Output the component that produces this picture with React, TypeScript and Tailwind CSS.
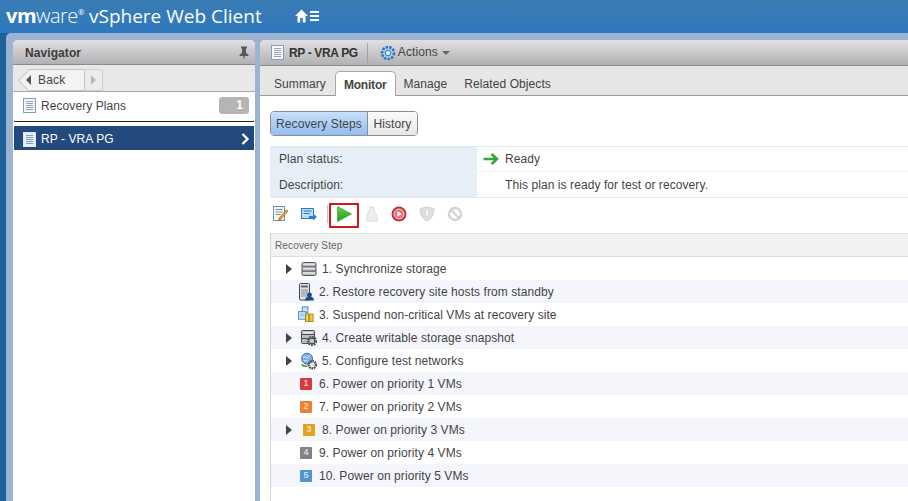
const font = "font-['Liberation_Sans',Arial,sans-serif]"

function DocIcon({ dark }: { dark?: boolean }) {
  return (
    <svg width="13" height="15" viewBox="0 0 13 15" className="shrink-0">
      <rect x="0.5" y="0.5" width="12" height="14" fill={dark ? "#e8eef5" : "#f7fafd"} stroke={dark ? "#dfe8f2" : "#7f9fc0"} />
      <path d="M3 3.5h7M3 5.5h7M3 7.5h7M3 9.5h7M3 11.5h7" stroke={dark ? "#7f9abb" : "#98a4b2"} strokeWidth="1" />
    </svg>
  )
}

function Gear({ x, y }: { x: number; y: number }) {
  return (
    <g transform={`translate(${x} ${y})`}>
      <circle r="3.8" fill="none" stroke="#4d5358" strokeWidth="2.6" strokeDasharray="1.8 0.7" />
      <circle r="1.2" fill="#c9cdd0" />
    </g>
  )
}

function StorageIcon() {
  return (
    <svg width="16" height="16" viewBox="0 0 16 16">
      <rect x="1" y="1.5" width="14" height="13" rx="1.5" fill="#b4b7bb" stroke="#55595e" />
      <path d="M1.5 5.8h13M1.5 10.2h13" stroke="#55595e" />
      <rect x="2" y="2.5" width="12" height="1.6" fill="#e2e4e6" />
      <rect x="2" y="6.8" width="12" height="1.6" fill="#e2e4e6" />
      <rect x="2" y="11.2" width="12" height="1.6" fill="#e2e4e6" />
    </svg>
  )
}

function HostIcon() {
  return (
    <svg width="16" height="18" viewBox="0 0 16 18">
      <rect x="1.5" y="0.5" width="10" height="16.5" rx="1" fill="#dfe3e8" stroke="#3f4a57" />
      <rect x="3" y="2.5" width="7" height="2" fill="#5a6878" />
      <rect x="3" y="6" width="7" height="8" fill="#aeb8c3" />
      <circle cx="11.5" cy="12" r="2.4" fill="#1d4f86" />
      <path d="M7 17.5c0-3 2-4 4.5-4s4.5 1 4.5 4z" fill="#1d4f86" />
    </svg>
  )
}

function SuspendIcon() {
  return (
    <svg width="17" height="17" viewBox="0 0 17 17">
      <rect x="4.5" y="0.5" width="6" height="6" fill="#cfe3f5" stroke="#3f86c4" />
      <rect x="0.5" y="5.5" width="8" height="8" fill="#d8e9f8" stroke="#3f86c4" />
      <path d="M2 8h5M2 10h5" stroke="#7fb0da" />
      <rect x="8" y="8" width="3.5" height="8" fill="#f4cf4f" stroke="#a87f17" />
      <rect x="12.5" y="8" width="3.5" height="8" fill="#f4cf4f" stroke="#a87f17" />
    </svg>
  )
}

function SnapshotIcon() {
  return (
    <svg width="16" height="17" viewBox="0 0 16 17">
      <rect x="0.5" y="1.5" width="13" height="13" rx="1" fill="#b9bcc0" stroke="#4b4f54" />
      <path d="M1 5.5h12M1 9.5h12" stroke="#4b4f54" />
      <rect x="2" y="3" width="10" height="1.4" fill="#f2f3f4" />
      <Gear x={11} y={12} />
    </svg>
  )
}

function NetworkIcon() {
  return (
    <svg width="17" height="18" viewBox="0 0 17 18">
      <circle cx="6.5" cy="6.5" r="5.8" fill="#7fb0ea" stroke="#3467b0" />
      <path d="M2 5c2-1 3 1 5 0s2-2 3-2M3 9c2-1 3 0 5 1" stroke="#e8f2fc" fill="none" />
      <path d="M0.5 12.5c2 2 4 2.5 6 2" stroke="#3d9a48" strokeWidth="1.6" fill="none" />
      <Gear x={12} y={13} />
    </svg>
  )
}

function Priority({ n, bg }: { n: number; bg: string }) {
  return (
    <div className={`w-[12px] h-[12px] rounded-[1px] flex items-center justify-center text-[9px] leading-none font-bold text-white/70 ${bg}`}>
      {n}
    </div>
  )
}

function PlayIcon() {
  return (
    <svg width="15" height="16" viewBox="0 0 15 16">
      <defs>
        <linearGradient id="pg" x1="0" y1="0" x2="0" y2="1">
          <stop offset="0" stopColor="#6fd04a" />
          <stop offset="1" stopColor="#1f9a20" />
        </linearGradient>
      </defs>
      <path d="M0.5 0.5L14.5 8L0.5 15.5Z" fill="url(#pg)" stroke="#2a9a2a" strokeWidth="0.6" />
    </svg>
  )
}

const steps = [
  { text: "1. Synchronize storage", arrow: true, icon: <StorageIcon /> },
  { text: "2. Restore recovery site hosts from standby", icon: <HostIcon /> },
  { text: "3. Suspend non-critical VMs at recovery site", icon: <SuspendIcon /> },
  { text: "4. Create writable storage snapshot", arrow: true, icon: <SnapshotIcon /> },
  { text: "5. Configure test networks", arrow: true, icon: <NetworkIcon /> },
  { text: "6. Power on priority 1 VMs", icon: <Priority n={1} bg="bg-[#d9373c]" /> },
  { text: "7. Power on priority 2 VMs", icon: <Priority n={2} bg="bg-[#ee8030]" /> },
  { text: "8. Power on priority 3 VMs", arrow: true, icon: <Priority n={3} bg="bg-[#e0a41c]" /> },
  { text: "9. Power on priority 4 VMs", icon: <Priority n={4} bg="bg-[#808285]" /> },
  { text: "10. Power on priority 5 VMs", icon: <Priority n={5} bg="bg-[#4f94cc]" /> },
]

export default function App() {
  return (
    <div className={`w-[908px] h-[501px] overflow-hidden flex flex-col bg-[#1f6199] ${font} text-[12px] tracking-[0.08px] text-[#444]`}>
      {/* Header */}
      <header className="h-[33px] shrink-0 flex items-center pl-[6px] bg-gradient-to-b from-[#3a7db5] to-[#2e78bd] text-white">
        <span className="font-['Open_Sans',sans-serif] text-[20px] leading-none tracking-[-0.5px] mb-[2px]">
          <span className="font-bold">vm</span>
          <span className="font-light">ware</span>
          <span className="text-[8px] align-super">®</span>
        </span>
        <span className="ml-[5px] font-['Open_Sans',sans-serif] text-[19px] leading-none tracking-normal mb-[1px]">vSphere Web Client</span>
        <svg width="24" height="14" viewBox="0 0 24 14" className="ml-[33px] mb-[1px]">
          <path d="M6.5 0.5L0 7H2.5V13.5H5.2V9H7.8V13.5H10.5V7H13Z" fill="#fff" />
          <path d="M15 3h9M15 7h9M15 11h9" stroke="#fff" strokeWidth="2" />
        </svg>
      </header>

      <div className="flex-1 flex min-h-0 ml-[6px] pl-[7px] pt-[7px] gap-[5px] rounded-tl-[5px] bg-[#9ab4d2]">
        {/* Navigator */}
        <aside className="w-[242px] shrink-0 flex flex-col bg-white rounded-t-[5px] overflow-hidden">
          <div className="h-[25px] shrink-0 flex items-center justify-between pl-[12px] pr-[5px] pt-[1px] bg-gradient-to-b from-[#e4dfe2] to-[#b1b1b3] border-b border-[#8c8c8c] font-bold text-[#3c3c3c]">
            <span>Navigator</span>
            <svg width="12" height="14" viewBox="0 0 12 14">
              <path d="M3 0.5h6v1.5l-1 .7v4l2.5 2.3v1H6.8L6 14l-.8-4H1.5V9L4 6.7v-4L3 2z" fill="#55585c" />
            </svg>
          </div>
          <div className="h-[27px] shrink-0 flex items-end pl-[15px] bg-[#e8e8e8] border-b border-[#a8a8a8]">
            <div className="h-[22px] w-[75px] flex">
              <div className="relative w-[57px] flex items-center gap-[7px] bg-[#f3f3f3] border border-l-0 border-[#c4c4c4] rounded-r-[2px] text-[#444]">
                {/* pointed left edge of the back button */}
                <span className="absolute left-[-7.5px] top-[2.5px] w-[15px] h-[15px] rotate-45 bg-[#f3f3f3] border-l border-b border-[#c4c4c4]" />
                <span className="relative -ml-[2px] w-0 h-0 border-y-[5px] border-y-transparent border-r-[5px] border-r-[#555]" />
                <span className="relative tracking-[0.2px]">Back</span>
              </div>
              <div className="flex-1 flex items-center justify-center bg-[#ececec] border border-l-0 border-[#cfcfcf] rounded-r-[3px]">
                <span className="w-0 h-0 border-y-[5px] border-y-transparent border-l-[5px] border-l-[#b8b8b8]" />
              </div>
            </div>
          </div>
          <div className="h-[29px] shrink-0 flex items-center pl-[10px] pr-[6px] pb-[2px] gap-[5px] text-[#444]">
            <DocIcon />
            <span className="flex-1">Recovery Plans</span>
            <span className="w-[30px] h-[17px] rounded-[3px] bg-[#b5b5b5] text-white font-bold text-right pr-[6px] leading-[17px]">1</span>
          </div>
          <div className="h-[1px] mx-[1px] bg-[#222] shrink-0" />
          <div className="h-[24px] mt-[4px] mx-[1px] shrink-0 flex items-center pl-[9px] pr-[4px] pt-[2px] gap-[5px] bg-[#234a7c] text-white">
            <DocIcon dark />
            <span className="flex-1">RP - VRA PG</span>
            <svg width="9" height="12" viewBox="0 0 9 12">
              <path d="M1.5 1L6.5 6L1.5 11" fill="none" stroke="#fff" strokeWidth="2.4" />
            </svg>
          </div>
        </aside>

        {/* Main panel */}
        <main className="flex-1 min-w-0 flex flex-col bg-white rounded-tl-[5px] overflow-hidden">
          <div className="h-[26px] shrink-0 flex items-center pl-[11px] bg-gradient-to-b from-[#e4dfe2] to-[#b1b1b3] border-b border-[#8c8c8c]">
            <DocIcon />
            <span className="ml-[5px] font-bold text-[#333] tracking-[-0.35px]">RP - VRA PG</span>
            <span className="ml-[9px] w-[1px] h-[20px] bg-[#a4a4a4]" />
            <svg width="18" height="18" viewBox="0 0 18 18" className="ml-[11px]">
              <circle cx="9" cy="9" r="6" fill="#a9cdf0" stroke="#2f75c0" strokeWidth="2.6" strokeDasharray="2.4 1.2" />
              <circle cx="9" cy="9" r="2.8" fill="#e4eef8" stroke="#2f75c0" />
            </svg>
            <span className="ml-[1px] mb-[2px] text-[#444]">Actions</span>
            <span className="ml-[4px] w-0 h-0 border-x-[4px] border-x-transparent border-t-[4px] border-t-[#666]" />
          </div>
          <div className="h-[30px] shrink-0 flex items-end pl-[6px] bg-[#e6e6e6] border-b border-[#9a9a9a]">
            <span className="h-[23px] px-[8px] leading-[24px] text-[#444]">Summary</span>
            <span className="h-[25px] -mb-px ml-[1px] px-[8px] leading-[26px] font-bold tracking-[-0.2px] text-[#444] bg-white border border-b-0 border-[#a8a8a8] rounded-t-[5px]">Monitor</span>
            <span className="h-[23px] px-[8px] leading-[24px] text-[#444]">Manage</span>
            <span className="h-[23px] px-[9px] leading-[24px] text-[#444]">Related Objects</span>
          </div>

          <div className="flex-1 min-h-0 pl-[10px] flex flex-col">
            <div className="mt-[15px] h-[25px] w-[148px] shrink-0 flex rounded-[4px] border border-[#8d8d8d] overflow-hidden text-[#444]">
              <div className="w-[97px] flex items-center justify-center bg-gradient-to-b from-[#c9e0fa] to-[#93bdf0] border-r border-[#8d8d8d]">Recovery Steps</div>
              <div className="flex-1 flex items-center justify-center bg-gradient-to-b from-[#fbfbfb] to-[#e6e6e6]">History</div>
            </div>

            <div className="mt-[10px] shrink-0 border-t border-[#e4e8ec] border-b">
              <div className="h-[25px] flex items-center border-b border-[#eef1f4]">
                <div className="w-[207px] self-stretch flex items-center pl-[9px] bg-[#e6eff7]">Plan status:</div>
                <svg width="16" height="12" viewBox="0 0 16 12" className="ml-[6px]">
                  <path d="M0.5 6H13M8.5 1L14 6L8.5 11" fill="none" stroke="#3aa53a" strokeWidth="2.6" />
                </svg>
                <span className="ml-[6px]">Ready</span>
              </div>
              <div className="h-[25px] flex items-center">
                <div className="w-[207px] self-stretch flex items-center pl-[9px] bg-[#e6eff7]">Description:</div>
                <span className="ml-[28px]">This plan is ready for test or recovery.</span>
              </div>
            </div>

            {/* Toolbar */}
            <div className="h-[35px] shrink-0 flex items-center pl-[3px] pb-[3px]">
              <svg width="16" height="16" viewBox="0 0 16 16">
                <rect x="0.5" y="0.5" width="11" height="14" fill="#f6f8fb" stroke="#6d8fb8" />
                <path d="M2.5 3.5h7M2.5 6h7M2.5 8.5h5" stroke="#7e8a96" />
                <path d="M15 5L8 13L5.5 15L6.5 11.5L13.5 4Z" fill="#f3a81e" stroke="#9a5c10" strokeWidth="0.7" />
              </svg>
              <svg width="16" height="14" viewBox="0 0 16 14" className="ml-[12px]">
                <rect x="0.5" y="1.5" width="12" height="10" fill="#bcdcf4" stroke="#2c7dbe" />
                <path d="M2.5 4h8M2.5 6.5h6" stroke="#2c7dbe" />
                <path d="M8 9h4V6.5l4 3.5-4 3.5V11H8z" fill="#2a7fd0" />
              </svg>
              <span className="ml-[10px] w-[1px] h-[18px] bg-[#c4c4c4]" />
              <div className="ml-[1px] mt-[3px] w-[30px] h-[25px] border-2 border-[#d01722] flex items-center justify-center pl-[1px] pb-[3px]">
                <PlayIcon />
              </div>
              <svg width="14" height="16" viewBox="0 0 14 16" className="ml-[6px]">
                <path d="M5 1h3l1 4c2 2 3 4 3 6v4H2v-4c0-2 1-4 2-6z" fill="#ededed" stroke="#dcdcdc" />
              </svg>
              <svg width="16" height="16" viewBox="0 0 16 16" className="ml-[12px]">
                <circle cx="8" cy="8" r="7.5" fill="#b9343c" />
                <circle cx="8" cy="8" r="5" fill="#ef6f74" stroke="#e8d8d8" />
                <path d="M6.3 5.2L11 8L6.3 10.8Z" fill="#fff" />
              </svg>
              <svg width="16" height="16" viewBox="0 0 16 16" className="ml-[12px]">
                <path d="M1 2.5L8 1L15 2.5C15 9 12.5 13 8 15C3.5 13 1 9 1 2.5Z" fill="#dedede" stroke="#d2d2d2" />
                <path d="M7 4.5h2v5H7z" fill="#f4f4f4" />
              </svg>
              <svg width="16" height="16" viewBox="0 0 16 16" className="ml-[12px]">
                <circle cx="8" cy="8" r="6" fill="none" stroke="#d2d2d2" strokeWidth="2.4" />
                <path d="M4 4L12 12" stroke="#d2d2d2" strokeWidth="2.4" />
              </svg>
            </div>

            {/* Recovery steps tree */}
            <div className="flex-1 min-h-0 border-l border-[#d4d4d4]">
              <div className="h-[24px] flex items-center pl-[4px] bg-[#f2f2f2] border-y border-[#e0e0e0] text-[10px] tracking-[0.15px] text-[#666]">
                Recovery Step
              </div>
              {steps.map((step, i) => (
                <div
                  key={step.text}
                  className={`h-[23px] flex items-center ${step.arrow ? "pl-[15px]" : "pl-[27px]"} ${i % 2 === 1 ? "bg-[#f4f6fb]" : "bg-white"}`}
                >
                  {step.arrow && (
                    <span className="w-[15px] shrink-0">
                      <span className="block w-0 h-0 border-y-[5px] border-y-transparent border-l-[6px] border-l-[#3c4347]" />
                    </span>
                  )}
                  <span className="w-[16px] h-[18px] mr-[5px] shrink-0 flex items-center justify-center">{step.icon}</span>
                  <span className="text-[#444]">{step.text}</span>
                </div>
              ))}
            </div>
          </div>
        </main>
      </div>
    </div>
  )
}
